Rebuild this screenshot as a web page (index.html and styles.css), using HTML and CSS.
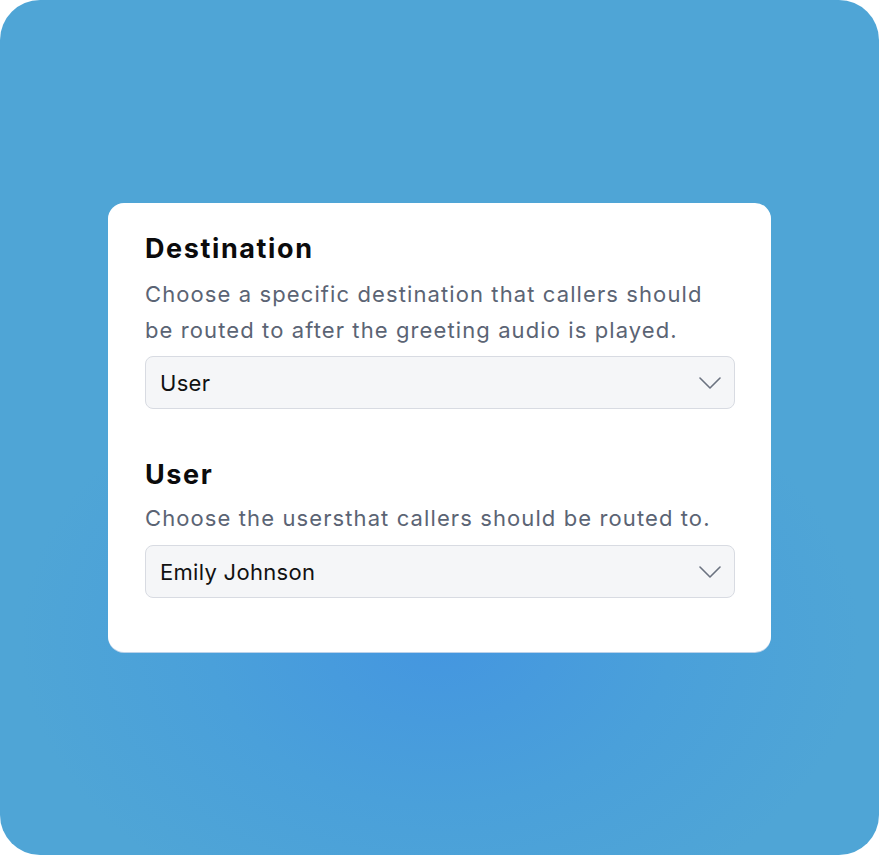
FILE: index.html
```html
<!DOCTYPE html>
<html lang="en">
<head>
<meta charset="utf-8">
<link rel="stylesheet" href="styles.css">
</head>
<body>
<div class="backdrop">
  <div class="card">
    <section class="field">
      <h2 class="field-title">Destination</h2>
      <p class="field-desc">Choose a specific destination that callers should be routed to after the greeting audio is played.</p>
      <div class="select">
        <span class="select-value">User</span>
        <svg class="chevron" width="22" height="12" viewBox="0 0 22 12" fill="none"><path d="M1 1l10 10L21 1" stroke="#6b7280" stroke-width="1.6" stroke-linecap="round" stroke-linejoin="round"/></svg>
      </div>
    </section>
    <section class="field field-compact">
      <h2 class="field-title">User</h2>
      <p class="field-desc">Choose the usersthat callers should be routed to.</p>
      <div class="select">
        <span class="select-value">Emily Johnson</span>
        <svg class="chevron" width="22" height="12" viewBox="0 0 22 12" fill="none"><path d="M1 1l10 10L21 1" stroke="#6b7280" stroke-width="1.6" stroke-linecap="round" stroke-linejoin="round"/></svg>
      </div>
    </section>
  </div>
</div>
</body>
</html>
```
FILE: styles.css
```css
html, body {
  margin: 0;
  padding: 0;
  background: #ffffff;
}
body {
  font-family: Inter, "Liberation Sans", sans-serif;
}
.backdrop {
  width: 879px;
  height: 855px;
  border-radius: 40px;
  background: radial-gradient(ellipse 420px 300px at 440px 640px, #4496e0 0%, #4aa0da 55%, #4fa5d6 100%);
  display: flex;
  justify-content: center;
  align-items: flex-start;
  padding-top: 203px;
  box-sizing: border-box;
}
.card {
  width: 663px;
  box-sizing: border-box;
  background: #ffffff;
  border-radius: 16px;
  padding: 30px 36px 54px 37px;
  box-shadow: 0 1px 0 rgba(200, 215, 235, 0.9);
  display: flex;
  flex-direction: column;
  gap: 50px;
}
.field-title {
  margin: 0 0 11px;
  font-size: 27px;
  line-height: 32px;
  font-weight: 700;
  color: #0b0b0c;
  letter-spacing: 1.6px;
}
.field-desc {
  margin: 0 0 8px;
  font-size: 22px;
  line-height: 36px;
  color: #5b6474;
  letter-spacing: 1.1px;
}
.field-compact .field-title {
  margin-bottom: 9px;
}
.field-compact .field-desc {
  margin-bottom: 9px;
}
.select {
  height: 53px;
  box-sizing: border-box;
  border: 1px solid #d8dbe2;
  border-radius: 8px;
  background: #f5f6f8;
  display: flex;
  align-items: center;
  justify-content: space-between;
  padding: 0 13px 0 14px;
}
.select-value {
  font-size: 22px;
  color: #111111;
  letter-spacing: 0.3px;
}
.chevron {
  display: block;
}
```
